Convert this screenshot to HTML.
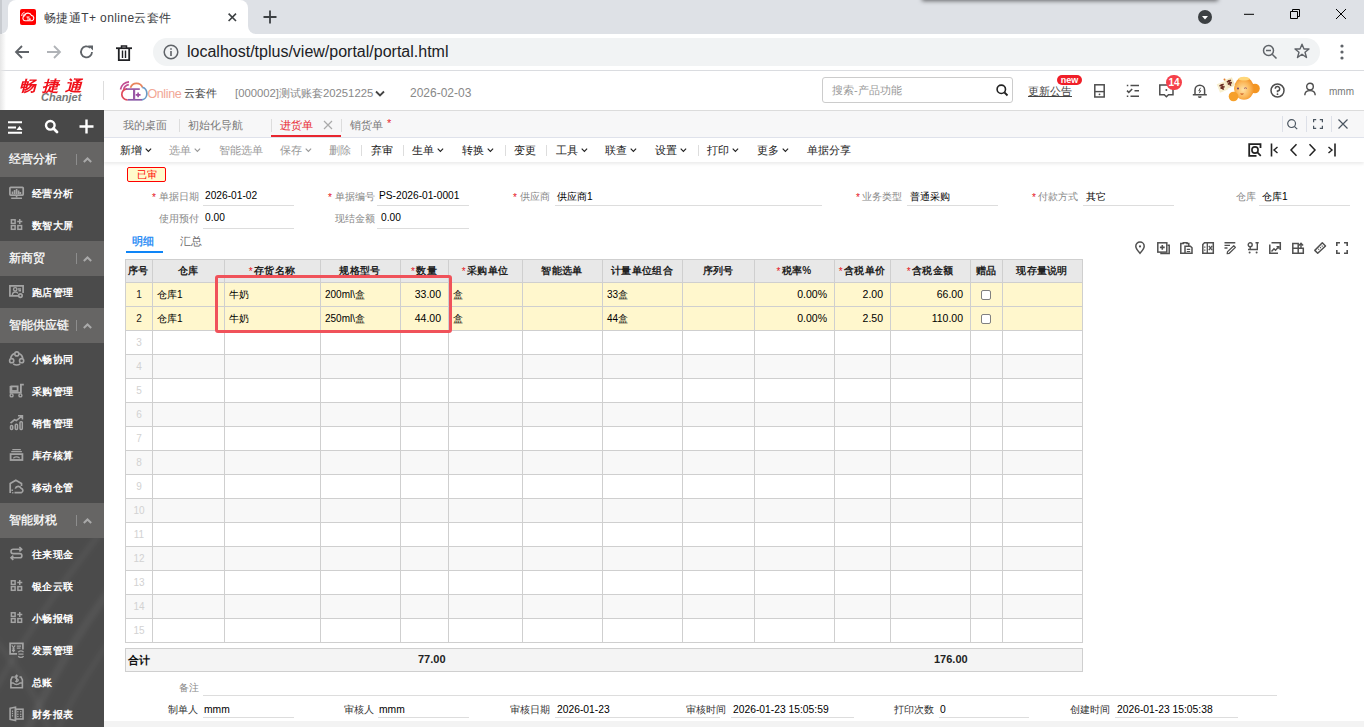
<!DOCTYPE html><html><head><meta charset="utf-8"><style>
*{box-sizing:border-box;margin:0;padding:0}
html,body{width:1364px;height:727px;overflow:hidden;background:#fff;font-family:"Liberation Sans",sans-serif;color:#333}
body{position:relative}
.a{position:absolute;white-space:nowrap}
svg{position:absolute;overflow:visible}
</style></head><body>
<div class="a" style="left:0;top:0;width:1364px;height:34px;background:#dee1e6"></div>
<div class="a" style="left:0;top:24px;width:264px;height:10px;background:#fff"></div>
<div class="a" style="left:0;top:0;width:8px;height:34px;background:#dee1e6;border-bottom-right-radius:8px"></div>
<div class="a" style="left:248px;top:0;width:16px;height:34px;background:#dee1e6;border-bottom-left-radius:8px"></div>
<div class="a" style="left:0;top:0;width:2px;height:34px;background:#c8cbd0"></div>
<div class="a" style="left:8px;top:0;width:240px;height:34px;background:#fff;border-radius:8px 8px 0 0"></div>
<div class="a" style="left:20px;top:9px;width:16px;height:16px;background:#f00;border-radius:2px"></div>
<svg style="left:20px;top:9px" width="16" height="16" viewBox="0 0 16 16"><path d="M5 11.8A2.6 2.6 0 0 1 4.6 6.8A3.6 3.6 0 0 1 11.4 6.4A2.8 2.8 0 0 1 12 11.8Z" fill="none" stroke="#fff" stroke-width="1.1"/><path d="M6.5 8H9.6M8 8V11.8M8.8 10.2H10.8M9.8 9.2V11.2" stroke="#fff" stroke-width="0.9"/><path d="M1.6 7A3.8 3.8 0 0 1 4.6 3.2M3.1 7.2A2.2 2.2 0 0 1 4.9 5" fill="none" stroke="#fff" stroke-width="0.9"/></svg>
<div class="a" style="left:44px;top:10px;font-size:12px;letter-spacing:0.4px;color:#3c4043">畅捷通T+ online云套件</div>
<svg style="left:228px;top:13px" width="9" height="9"><path d="M0.6 0.6L8 8M8 0.6L0.6 8" stroke="#3c4043" stroke-width="1.6"/></svg>
<svg style="left:263px;top:10px" width="14" height="14"><path d="M7 0.5V13.5M0.5 7H13.5" stroke="#3c4043" stroke-width="1.8"/></svg>
<div class="a" style="left:1198px;top:10px;width:14px;height:14px;border-radius:7px;background:#3c4043"></div>
<svg style="left:1198px;top:10px" width="14" height="14"><path d="M4 6L10 6L7 9.5Z" fill="#fff"/></svg>
<svg style="left:1243px;top:9px" width="16" height="16"><path d="M1 5.3H11" stroke="#000" stroke-width="1"/></svg>
<svg style="left:1289px;top:8px" width="14" height="14"><path d="M1.5 3.5h7v7h-7z M3.5 3.5v-2h7v7h-2" fill="none" stroke="#000" stroke-width="1"/></svg>
<svg style="left:1335px;top:8px" width="14" height="14"><path d="M1 1L11 11M11 1L1 11" stroke="#000" stroke-width="1"/></svg>
<div class="a" style="left:922px;top:-6px;width:296px;height:6px;box-shadow:0 1px 4px rgba(0,0,0,.55);background:#fff"></div>
<div class="a" style="left:0;top:34px;width:1364px;height:37px;background:#fff;border-bottom:1px solid #dadce0"></div>
<div class="a" style="left:0;top:34px;width:6px;height:76px;background:linear-gradient(90deg,#e6e6e6,rgba(255,255,255,0))"></div>
<svg style="left:14px;top:44px" width="16" height="16"><path d="M15 8H2M8 2L2 8L8 14" fill="none" stroke="#5f6368" stroke-width="1.8"/></svg>
<svg style="left:46px;top:44px" width="16" height="16"><path d="M1 8H14M8 2L14 8L8 14" fill="none" stroke="#b0b3b7" stroke-width="1.8"/></svg>
<svg style="left:79px;top:44px" width="16" height="16"><path d="M13 8A5.5 5.5 0 1 1 11.2 3.8" fill="none" stroke="#5f6368" stroke-width="1.8"/><path d="M9 1.5H14V6.5Z" fill="#5f6368"/></svg>
<svg style="left:116px;top:45px" width="16" height="17"><path d="M0 3.2H16" stroke="#202124" stroke-width="1.8"/><path d="M5.5 3V1H10.5V3" fill="none" stroke="#202124" stroke-width="1.5"/><path d="M2.8 3.5V15.2H13.2V3.5" fill="none" stroke="#202124" stroke-width="1.8"/><path d="M6.5 5.5V13M9.5 5.5V13" stroke="#202124" stroke-width="1.4"/></svg>
<div class="a" style="left:153px;top:38px;width:1167px;height:28px;background:#f1f3f4;border-radius:14px"></div>
<svg style="left:163px;top:44px" width="16" height="16"><circle cx="8" cy="8" r="6.8" fill="none" stroke="#5f6368" stroke-width="1.5"/><path d="M8 7V12M8 4.3V5.8" stroke="#5f6368" stroke-width="1.6"/></svg>
<div class="a" style="left:187px;top:43px;font-size:16px;color:#202124">localhost/tplus/view/portal/portal.html</div>
<svg style="left:1262px;top:44px" width="16" height="16"><circle cx="6.5" cy="6.5" r="5" fill="none" stroke="#5f6368" stroke-width="1.5"/><path d="M4 6.5H9M10.2 10.2L14.5 14.5" stroke="#5f6368" stroke-width="1.5"/></svg>
<svg style="left:1294px;top:43px" width="16" height="16"><path d="M8 1.2L10 6H15L11 9.2L12.5 14.5L8 11.3L3.5 14.5L5 9.2L1 6H6Z" fill="none" stroke="#5f6368" stroke-width="1.4" stroke-linejoin="round"/></svg>
<svg style="left:1339px;top:44px" width="6" height="16"><circle cx="3" cy="2" r="1.6" fill="#5f6368"/><circle cx="3" cy="8" r="1.6" fill="#5f6368"/><circle cx="3" cy="14" r="1.6" fill="#5f6368"/></svg>
<div class="a" style="left:0;top:71px;width:1364px;height:40px;background:#fff;border-bottom:1px solid #dcdcdc"></div>
<div class="a" style="left:0;top:71px;width:6px;height:39px;background:linear-gradient(90deg,#e6e6e6,rgba(255,255,255,0))"></div>
<div class="a" style="left:19px;top:77px;font-size:15px;font-weight:bold;font-style:italic;color:#f0101a;letter-spacing:5.5px;transform:scaleX(1.12);transform-origin:0 0">畅捷通</div>
<div class="a" style="left:41px;top:91px;font-size:11px;font-weight:bold;font-style:italic;color:#777">Chanjet</div>
<div class="a" style="left:103px;top:81px;width:1px;height:19px;background:#ddd"></div>
<svg style="left:116px;top:78px" width="34" height="26" viewBox="0 0 34 26"><path d="M4.5 11.5A9.5 9.5 0 0 1 13 3.8" fill="none" stroke="#c24d92" stroke-width="1.7"/><path d="M7.6 11.8A6.3 6.3 0 0 1 12.8 6.6" fill="none" stroke="#c24d92" stroke-width="1.6"/><path d="M11 10.8A5.4 5.4 0 0 0 11.6 21.8" fill="none" stroke="#e04a5a" stroke-width="1.7"/><path d="M11.6 21.8H26" fill="none" stroke="#8a5aa8" stroke-width="1.7"/><path d="M14.5 9.8A6.4 6.4 0 0 1 26.5 9.5" fill="none" stroke="#e9855c" stroke-width="1.7"/><path d="M26.3 9.3A5.4 6.3 0 0 1 26 21.8" fill="none" stroke="#6a9ac8" stroke-width="1.7"/><path d="M10 11.1H23.8" stroke="#9a5aa6" stroke-width="1.7"/><path d="M18.1 11V21.5" stroke="#9a5aa6" stroke-width="2.2"/><path d="M22.1 14.5V19.3M19.7 16.9H24.5" stroke="#9a4aa0" stroke-width="1.6"/></svg>
<div class="a" style="left:147.5px;top:87px;font-size:12.5px;letter-spacing:-0.4px;color:#f2a796">Online</div>
<div class="a" style="left:184px;top:87px;font-size:10.5px;color:#444">云套件</div>
<div class="a" style="left:235px;top:86px;font-size:11.3px;color:#888">[000002]测试账套20251225</div>
<svg style="left:375px;top:90px" width="10" height="8"><path d="M1 1.5L5 5.5L9 1.5" fill="none" stroke="#444" stroke-width="1.8"/></svg>
<div class="a" style="left:410px;top:86px;font-size:12px;color:#888">2026-02-03</div>
<div class="a" style="left:822px;top:77px;width:191px;height:26px;border:1px solid #ccc;border-radius:3px;background:#fff"></div>
<div class="a" style="left:832px;top:83px;font-size:11px;color:#999">搜索-产品功能</div>
<svg style="left:996px;top:84px" width="14" height="14"><circle cx="5.3" cy="5.3" r="4.2" fill="none" stroke="#222" stroke-width="1.6"/><path d="M8.5 8.5L11.5 11.5" stroke="#222" stroke-width="1.8"/></svg>
<div class="a" style="left:1028px;top:84px;font-size:11px;color:#444;text-decoration:underline">更新公告</div>
<div class="a" style="left:1057px;top:75px;width:25px;height:10px;border-radius:5px;background:#f01e28;color:#fff;font-size:9px;font-weight:bold;line-height:10px;text-align:center">new</div>
<svg style="left:1094px;top:84px" width="11" height="14"><rect x="0.8" y="0.8" width="9.4" height="12.2" fill="none" stroke="#4d4d4d" stroke-width="1.5"/><path d="M0.8 7.6H10.2" stroke="#4d4d4d" stroke-width="1.4"/><circle cx="5.5" cy="10.3" r="0.9" fill="#4d4d4d"/></svg>
<svg style="left:1126px;top:84px" width="14" height="14"><path d="M4.5 1.4H13M8.5 6.8H13M4.5 12.2H13" stroke="#4d4d4d" stroke-width="1.5"/><path d="M1 6.6L2.8 8.4L6.2 5" fill="none" stroke="#4d4d4d" stroke-width="1.5"/><path d="M0.8 1.4H2.3M0.8 12.2H2.3" stroke="#4d4d4d" stroke-width="1.5"/></svg>
<svg style="left:1159px;top:84px" width="15" height="14"><path d="M0.8 1H14V10.8H9.5L7.4 12.8L5.3 10.8H0.8Z" fill="none" stroke="#4d4d4d" stroke-width="1.5"/><circle cx="7.4" cy="6" r="1" fill="#4d4d4d"/></svg>
<div class="a" style="left:1166px;top:75px;width:16px;height:15px;border-radius:8px;background:#f5404a;color:#fff;font-size:10px;font-weight:bold;line-height:15px;text-align:center">14</div>
<svg style="left:1192px;top:83px" width="16" height="15"><path d="M3 11.5V7A4.8 4.8 0 0 1 12.6 7V11.5M0.8 11.8H14.8M6.4 13.3A1.6 1.6 0 0 0 9.2 13.3" fill="none" stroke="#4d4d4d" stroke-width="1.5"/><path d="M8.5 4.8L6.8 7.8H8.8L7.2 10.2" fill="none" stroke="#4d4d4d" stroke-width="1"/></svg>
<svg style="left:1210px;top:72px" width="56" height="34" viewBox="0 0 56 34"><defs><radialGradient id="mh" cx="45%" cy="55%" r="60%"><stop offset="0" stop-color="#ffe2a6"/><stop offset="0.6" stop-color="#fbb454"/><stop offset="1" stop-color="#f08a1c"/></radialGradient></defs><circle cx="45" cy="16.5" r="4.8" fill="#f39522"/><ellipse cx="34" cy="16.5" rx="10" ry="11.3" fill="url(#mh)"/><path d="M28 7C30 4 38 4 40 7C37 9 31 9 28 7Z" fill="#ffd77a"/><circle cx="28" cy="16.5" r="1" fill="#6a3d6a"/><path d="M34 16.5Q35.5 15 37 16.5" stroke="#8a4a6a" stroke-width="0.8" fill="none"/><path d="M30 21.5Q32 24 34 21.5Z" fill="#c9541a"/><circle cx="23.5" cy="24.5" r="4.8" fill="#f6a02a"/><g transform="rotate(-22 16 14)"><rect x="8" y="9" width="8.5" height="9" fill="#f8efcf"/><rect x="16.3" y="8" width="8.5" height="9" fill="#f4e8c4"/><path d="M10 11.5h4.5M10 14h4.5M12.2 10.5v6M18.3 10.5h4.5M18.3 13h4.5M20.5 9.5v6" stroke="#6b2f24" stroke-width="1.6"/></g><circle cx="14.5" cy="7.5" r="1" fill="#e07a2a"/></svg>
<svg style="left:1270px;top:83px" width="15" height="15"><circle cx="7.5" cy="7.5" r="6.5" fill="none" stroke="#4d4d4d" stroke-width="1.5"/><path d="M5.3 5.8A2.2 2.2 0 1 1 7.5 8V9.2" fill="none" stroke="#4d4d4d" stroke-width="1.5"/><circle cx="7.5" cy="11.2" r="0.9" fill="#4d4d4d"/></svg>
<svg style="left:1303px;top:82px" width="14" height="15"><circle cx="7" cy="4.6" r="3.3" fill="none" stroke="#4d4d4d" stroke-width="1.4"/><path d="M1.8 13.3C1.8 10.3 4 8.6 7 8.6S12.2 10.3 12.2 13.3" fill="none" stroke="#4d4d4d" stroke-width="1.4"/></svg>
<div class="a" style="left:1329px;top:86px;font-size:10px;color:#777">mmm</div>
<div class="a" style="left:0;top:110px;width:104px;height:617px;background:#4b4b4b"></div>
<div class="a" style="left:0;top:110px;width:104px;height:32px;background:#484848"></div>
<svg style="left:8px;top:121px" width="16" height="13"><path d="M0 1.2H14M0 6.5H8M0 11.8H14" stroke="#fff" stroke-width="2"/><path d="M11.5 5L14.5 9H8.5Z" fill="#fff"/></svg>
<svg style="left:44px;top:119px" width="16" height="16"><circle cx="6.3" cy="6.3" r="4.3" fill="none" stroke="#fff" stroke-width="2.4"/><path d="M9.5 9.5L13 13" stroke="#fff" stroke-width="2.8" stroke-linecap="round"/></svg>
<svg style="left:79px;top:119px" width="16" height="16"><path d="M7.5 0.5V14.5M0.5 7.5H14.5" stroke="#fff" stroke-width="2.4"/></svg>
<svg style="left:0;top:520px" width="104" height="207" viewBox="0 0 104 207"><defs><filter id="bl" x="-50%" y="-50%" width="200%" height="200%"><feGaussianBlur stdDeviation="2.5"/></filter></defs><g fill="none" stroke="#fff" filter="url(#bl)"><path d="M110 0C80 40 40 90 -5 170" stroke-width="5" stroke-opacity="0.05"/><path d="M110 70C80 110 50 160 25 215" stroke-width="7" stroke-opacity="0.06"/><path d="M110 120C90 150 70 180 55 215" stroke-width="4" stroke-opacity="0.05"/><path d="M-5 120C20 150 40 180 50 215" stroke-width="6" stroke-opacity="0.04"/></g></svg>
<div class="a" style="left:0;top:142px;width:104px;height:35px;background:#666564"></div>
<div class="a" style="left:9px;top:151px;font-size:12px;-webkit-text-stroke:0.25px #fff;color:#fff">经营分析</div>
<div class="a" style="left:76px;top:154px;width:1px;height:11px;background:#8d8d8d"></div>
<svg style="left:82.5px;top:157px" width="9" height="6"><path d="M0.8 5L4.5 1.5L8.2 5" fill="none" stroke="#a9a9a9" stroke-width="2"/></svg>
<svg style="left:0;top:177px" width="30" height="32"><rect x="9.9" y="10.3" width="13.3" height="7.8" rx="0.8" fill="none" stroke="#a4a4a4" stroke-width="1.7"/><path d="M12.5 17V14.5M14.6 17V13M16.6 17V12M18.6 17V13.5M20.4 17V15" stroke="#a4a4a4" stroke-width="1.6"/><path d="M16.6 18.5V20.3M11.2 21.2H22" stroke="#a4a4a4" stroke-width="1.6"/></svg>
<div class="a" style="left:32px;top:187px;font-size:10px;letter-spacing:0.3px;color:#fff;font-weight:bold">经营分析</div>
<svg style="left:0;top:209px" width="30" height="32"><rect x="11.4" y="10.8" width="3.7" height="3.6" fill="none" stroke="#a4a4a4" stroke-width="1.5"/><rect x="11.4" y="16.6" width="3.7" height="3.7" fill="none" stroke="#a4a4a4" stroke-width="1.5"/><rect x="17.9" y="16.6" width="3.7" height="3.7" fill="none" stroke="#a4a4a4" stroke-width="1.5"/><path d="M19.75 10V15.1M17.2 12.5H22.3" stroke="#a4a4a4" stroke-width="1.5"/></svg>
<div class="a" style="left:32px;top:219px;font-size:10px;letter-spacing:0.3px;color:#fff;font-weight:bold">数智大屏</div>
<div class="a" style="left:0;top:241px;width:104px;height:35px;background:#666564"></div>
<div class="a" style="left:9px;top:250px;font-size:12px;-webkit-text-stroke:0.25px #fff;color:#fff">新商贸</div>
<div class="a" style="left:76px;top:253px;width:1px;height:11px;background:#8d8d8d"></div>
<svg style="left:82.5px;top:256px" width="9" height="6"><path d="M0.8 5L4.5 1.5L8.2 5" fill="none" stroke="#a9a9a9" stroke-width="2"/></svg>
<svg style="left:0;top:276px" width="30" height="32"><path d="M18.5 19.8H9.9V9.9H23.1V17" fill="none" stroke="#a4a4a4" stroke-width="1.7"/><circle cx="15.2" cy="13.3" r="1.7" fill="none" stroke="#a4a4a4" stroke-width="1.4"/><path d="M12.3 19.5C12.5 16.8 14 16 15.2 16S17.5 16.5 17.8 17.5M17.8 13H21M18.5 14.8H21" fill="none" stroke="#a4a4a4" stroke-width="1.4"/><circle cx="20.4" cy="19.6" r="2.6" fill="#a4a4a4"/><circle cx="20.4" cy="19.6" r="0.9" fill="#4b4b4b"/></svg>
<div class="a" style="left:32px;top:286px;font-size:10px;letter-spacing:0.3px;color:#fff;font-weight:bold">跑店管理</div>
<div class="a" style="left:0;top:308px;width:104px;height:35px;background:#666564"></div>
<div class="a" style="left:9px;top:317px;font-size:12px;-webkit-text-stroke:0.25px #fff;color:#fff">智能供应链</div>
<div class="a" style="left:76px;top:320px;width:1px;height:11px;background:#8d8d8d"></div>
<svg style="left:82.5px;top:323px" width="9" height="6"><path d="M0.8 5L4.5 1.5L8.2 5" fill="none" stroke="#a9a9a9" stroke-width="2"/></svg>
<svg style="left:0;top:343px" width="30" height="32"><circle cx="16.8" cy="10.9" r="2" fill="none" stroke="#a4a4a4" stroke-width="1.6"/><circle cx="11.7" cy="17.7" r="2.1" fill="none" stroke="#a4a4a4" stroke-width="1.6"/><circle cx="21.6" cy="17.7" r="2.1" fill="none" stroke="#a4a4a4" stroke-width="1.6"/><path d="M10.6 15.3A6.4 6.4 0 0 1 14.6 10.6M19 10.6A6.4 6.4 0 0 1 22.8 15.3M13.2 20.9A6.4 6.4 0 0 0 20.2 20.9" fill="none" stroke="#a4a4a4" stroke-width="1.6"/></svg>
<div class="a" style="left:32px;top:353px;font-size:10px;letter-spacing:0.3px;color:#fff;font-weight:bold">小畅协同</div>
<svg style="left:0;top:375px" width="30" height="32"><rect x="11.4" y="11.4" width="6.2" height="4.6" fill="none" stroke="#a4a4a4" stroke-width="1.8"/><path d="M10.2 17.6H20.9V9.6H23.8" fill="none" stroke="#a4a4a4" stroke-width="1.8"/><circle cx="11.6" cy="20.4" r="1.5" fill="none" stroke="#a4a4a4" stroke-width="1.4"/><circle cx="20.4" cy="20.4" r="1.5" fill="none" stroke="#a4a4a4" stroke-width="1.4"/><path d="M10.4 11V18.5" stroke="#a4a4a4" stroke-width="1.6"/></svg>
<div class="a" style="left:32px;top:385px;font-size:10px;letter-spacing:0.3px;color:#fff;font-weight:bold">采购管理</div>
<svg style="left:0;top:407px" width="30" height="32"><rect x="10.5" y="18.4" width="2.2" height="4" rx="1" fill="none" stroke="#a4a4a4" stroke-width="1.5"/><rect x="15.3" y="17.3" width="2.2" height="5.1" rx="0.8" fill="none" stroke="#a4a4a4" stroke-width="1.5"/><rect x="20" y="14.7" width="2.3" height="7.7" rx="0.8" fill="none" stroke="#a4a4a4" stroke-width="1.5"/><path d="M10.5 16.2L14.5 12.8L16.3 13.6L21.8 9.2M18 8.8H22.4V12.6" fill="none" stroke="#a4a4a4" stroke-width="1.6"/></svg>
<div class="a" style="left:32px;top:417px;font-size:10px;letter-spacing:0.3px;color:#fff;font-weight:bold">销售管理</div>
<svg style="left:0;top:439px" width="30" height="32"><path d="M12.3 10.6H20.8M11.2 12.7H21.9" stroke="#a4a4a4" stroke-width="1.3"/><rect x="10.6" y="15.1" width="11.8" height="5.9" fill="none" stroke="#a4a4a4" stroke-width="1.8"/><path d="M13.3 19.2Q16.5 16.6 19.7 19.2" fill="none" stroke="#a4a4a4" stroke-width="1.3"/></svg>
<div class="a" style="left:32px;top:449px;font-size:10px;letter-spacing:0.3px;color:#fff;font-weight:bold">库存核算</div>
<svg style="left:0;top:471px" width="30" height="32"><path d="M10.2 22V12.6L15.8 9.2L21.5 12.6V15" fill="none" stroke="#a4a4a4" stroke-width="1.7"/><path d="M14.5 21.6H21.5A2.2 2.2 0 0 0 21.2 17.4A3.1 3.1 0 0 0 15.3 17.6" fill="none" stroke="#a4a4a4" stroke-width="1.6"/><path d="M12.2 21.7h1.2M12.2 18.5V20" stroke="#a4a4a4" stroke-width="1.5"/></svg>
<div class="a" style="left:32px;top:481px;font-size:10px;letter-spacing:0.3px;color:#fff;font-weight:bold">移动仓管</div>
<div class="a" style="left:0;top:503px;width:104px;height:35px;background:#666564"></div>
<div class="a" style="left:9px;top:512px;font-size:12px;-webkit-text-stroke:0.25px #fff;color:#fff">智能财税</div>
<div class="a" style="left:76px;top:515px;width:1px;height:11px;background:#8d8d8d"></div>
<svg style="left:82.5px;top:518px" width="9" height="6"><path d="M0.8 5L4.5 1.5L8.2 5" fill="none" stroke="#a9a9a9" stroke-width="2"/></svg>
<svg style="left:0;top:538px" width="30" height="32"><path d="M21.5 11.2H13.2A2.2 2.2 0 0 0 13.2 15.6H19.8A2 2 0 0 1 19.8 19.8H11M19.4 9L21.7 11.2L19.4 13.4M13.3 17.6L11 19.8L13.3 22" fill="none" stroke="#a4a4a4" stroke-width="1.6"/></svg>
<div class="a" style="left:32px;top:548px;font-size:10px;letter-spacing:0.3px;color:#fff;font-weight:bold">往来现金</div>
<svg style="left:0;top:570px" width="30" height="32"><rect x="11.4" y="10.8" width="3.7" height="3.6" fill="none" stroke="#a4a4a4" stroke-width="1.5"/><rect x="11.4" y="16.6" width="3.7" height="3.7" fill="none" stroke="#a4a4a4" stroke-width="1.5"/><rect x="17.9" y="16.6" width="3.7" height="3.7" fill="none" stroke="#a4a4a4" stroke-width="1.5"/><path d="M19.75 10V15.1M17.2 12.5H22.3" stroke="#a4a4a4" stroke-width="1.5"/></svg>
<div class="a" style="left:32px;top:580px;font-size:10px;letter-spacing:0.3px;color:#fff;font-weight:bold">银企云联</div>
<svg style="left:0;top:602px" width="30" height="32"><rect x="11.4" y="10.8" width="3.7" height="3.6" fill="none" stroke="#a4a4a4" stroke-width="1.5"/><rect x="11.4" y="16.6" width="3.7" height="3.7" fill="none" stroke="#a4a4a4" stroke-width="1.5"/><rect x="17.9" y="16.6" width="3.7" height="3.7" fill="none" stroke="#a4a4a4" stroke-width="1.5"/><path d="M19.75 10V15.1M17.2 12.5H22.3" stroke="#a4a4a4" stroke-width="1.5"/></svg>
<div class="a" style="left:32px;top:612px;font-size:10px;letter-spacing:0.3px;color:#fff;font-weight:bold">小畅报销</div>
<svg style="left:0;top:634px" width="30" height="32"><path d="M17 19.9H10.1V9.4H22.9V15.5" fill="none" stroke="#a4a4a4" stroke-width="1.7"/><path d="M11.8 11.4L13.5 13.8L15.2 11.4M13.5 13.8V18.3M11.9 15H15.1M11.9 16.7H15.1M16.8 12.2H21M16.8 14.2H20.5" fill="none" stroke="#a4a4a4" stroke-width="1.2"/><path d="M18.3 18.3A2.7 2 0 0 1 23.5 18.3M18.3 22A2.7 2 0 0 0 23.5 22M18.5 20.2H23.5" fill="none" stroke="#a4a4a4" stroke-width="1.3"/></svg>
<div class="a" style="left:32px;top:644px;font-size:10px;letter-spacing:0.3px;color:#fff;font-weight:bold">发票管理</div>
<svg style="left:0;top:666px" width="30" height="32"><path d="M13.8 11H12.2L10.9 14V21.8H22.4V14L21 11H19.4" fill="none" stroke="#a4a4a4" stroke-width="1.6"/><path d="M10.9 17H13.2Q16.6 20 20 17H22.4" fill="none" stroke="#a4a4a4" stroke-width="1.4"/><path d="M18 10.2Q16.6 9 15.3 10.2T16.6 12.6T17.9 15Q16.6 16.2 15.2 15M16.6 8.6V16.6" fill="none" stroke="#a4a4a4" stroke-width="1.2"/></svg>
<div class="a" style="left:32px;top:676px;font-size:10px;letter-spacing:0.3px;color:#fff;font-weight:bold">总账</div>
<svg style="left:0;top:698px" width="30" height="32"><path d="M10.1 10.3L15.5 9.2V22.5L10.1 21.4Z" fill="none" stroke="#a4a4a4" stroke-width="1.6"/><path d="M12.5 12.5V19" stroke="#a4a4a4" stroke-width="1.2" stroke-dasharray="1.5 0.8"/><rect x="15.5" y="11.2" width="7.5" height="9.8" fill="none" stroke="#a4a4a4" stroke-width="1.6"/><path d="M17.8 13.8h.1M20.7 13.8h.1M17.8 16.2h.1M20.7 16.2h.1M17.8 18.6h.1M20.7 18.6h.1" stroke="#a4a4a4" stroke-width="1.5" stroke-linecap="round"/></svg>
<div class="a" style="left:32px;top:708px;font-size:10px;letter-spacing:0.3px;color:#fff;font-weight:bold">财务报表</div>
<div class="a" style="left:104px;top:111px;width:1260px;height:616px;background:#fff"></div>
<div class="a" style="left:104px;top:111px;width:1260px;height:27px;background:#f7f7f8;border-bottom:1px solid #e0e3ec"></div>
<div class="a" style="left:123px;top:118px;font-size:11px;color:#777">我的桌面</div>
<div class="a" style="left:179px;top:119px;width:1px;height:13px;background:#ddd"></div>
<div class="a" style="left:188px;top:118px;font-size:11px;color:#777">初始化导航</div>
<div class="a" style="left:271px;top:119px;width:1px;height:13px;background:#ddd"></div>
<div class="a" style="left:280px;top:118px;font-size:11px;color:#e8262f">进货单</div>
<svg style="left:323px;top:120px" width="10" height="10"><path d="M1 1L9 9M9 1L1 9" stroke="#aaa" stroke-width="1.2"/></svg>
<div class="a" style="left:271px;top:135px;width:70px;height:2px;background:#e8262f"></div>
<div class="a" style="left:341px;top:119px;width:1px;height:13px;background:#ddd"></div>
<div class="a" style="left:350px;top:118px;font-size:11px;color:#777">销货单</div>
<div class="a" style="left:387px;top:117px;font-size:11px;color:#e8262f">*</div>
<div class="a" style="left:1282px;top:116px;width:1px;height:16px;background:#dde0e8"></div>
<div class="a" style="left:1306px;top:116px;width:1px;height:16px;background:#dde0e8"></div>
<div class="a" style="left:1331px;top:116px;width:1px;height:16px;background:#dde0e8"></div>
<svg style="left:1287px;top:119px" width="11" height="11"><circle cx="4.6" cy="4.6" r="3.9" fill="none" stroke="#4a5560" stroke-width="1.2"/><path d="M7.6 7.6L10.2 10.2" stroke="#4a5560" stroke-width="1.2"/></svg>
<svg style="left:1313px;top:119px" width="10" height="10"><path d="M0.6 3.2V0.6H3.2M6.8 0.6H9.4V3.2M9.4 6.8V9.4H6.8M3.2 9.4H0.6V6.8" fill="none" stroke="#4a5560" stroke-width="1.2"/></svg>
<svg style="left:1338px;top:119px" width="10" height="10"><path d="M0.5 0.5L9.5 9.5M9.5 0.5L0.5 9.5" stroke="#4a5560" stroke-width="1.2"/></svg>
<div class="a" style="left:104px;top:138px;width:1260px;height:24px;background:#fff;box-shadow:0 2px 3px rgba(0,0,0,.08)"></div>
<div class="a" style="left:120px;top:143px;font-size:11px;color:#222">新增</div>
<svg style="left:144.5px;top:148px" width="7" height="5"><path d="M0.7 0.7L3.4 3.4L6.1 0.7" fill="none" stroke="#222" stroke-width="1.15"/></svg>
<div class="a" style="left:169px;top:143px;font-size:11px;color:#999">选单</div>
<svg style="left:193.5px;top:148px" width="7" height="5"><path d="M0.7 0.7L3.4 3.4L6.1 0.7" fill="none" stroke="#999" stroke-width="1.15"/></svg>
<div class="a" style="left:219px;top:143px;font-size:11px;color:#999">智能选单</div>
<div class="a" style="left:280px;top:143px;font-size:11px;color:#999">保存</div>
<svg style="left:304.5px;top:148px" width="7" height="5"><path d="M0.7 0.7L3.4 3.4L6.1 0.7" fill="none" stroke="#999" stroke-width="1.15"/></svg>
<div class="a" style="left:329px;top:143px;font-size:11px;color:#999">删除</div>
<div class="a" style="left:361px;top:145px;width:1px;height:11px;background:#ddd"></div>
<div class="a" style="left:371px;top:143px;font-size:11px;color:#222">弃审</div>
<div class="a" style="left:403px;top:145px;width:1px;height:11px;background:#ddd"></div>
<div class="a" style="left:412px;top:143px;font-size:11px;color:#222">生单</div>
<svg style="left:436.5px;top:148px" width="7" height="5"><path d="M0.7 0.7L3.4 3.4L6.1 0.7" fill="none" stroke="#222" stroke-width="1.15"/></svg>
<div class="a" style="left:462px;top:143px;font-size:11px;color:#222">转换</div>
<svg style="left:486.5px;top:148px" width="7" height="5"><path d="M0.7 0.7L3.4 3.4L6.1 0.7" fill="none" stroke="#222" stroke-width="1.15"/></svg>
<div class="a" style="left:505px;top:145px;width:1px;height:11px;background:#ddd"></div>
<div class="a" style="left:514px;top:143px;font-size:11px;color:#222">变更</div>
<div class="a" style="left:546px;top:145px;width:1px;height:11px;background:#ddd"></div>
<div class="a" style="left:556px;top:143px;font-size:11px;color:#222">工具</div>
<svg style="left:580.5px;top:148px" width="7" height="5"><path d="M0.7 0.7L3.4 3.4L6.1 0.7" fill="none" stroke="#222" stroke-width="1.15"/></svg>
<div class="a" style="left:605px;top:143px;font-size:11px;color:#222">联查</div>
<svg style="left:629.5px;top:148px" width="7" height="5"><path d="M0.7 0.7L3.4 3.4L6.1 0.7" fill="none" stroke="#222" stroke-width="1.15"/></svg>
<div class="a" style="left:655px;top:143px;font-size:11px;color:#222">设置</div>
<svg style="left:679.5px;top:148px" width="7" height="5"><path d="M0.7 0.7L3.4 3.4L6.1 0.7" fill="none" stroke="#222" stroke-width="1.15"/></svg>
<div class="a" style="left:698px;top:145px;width:1px;height:11px;background:#ddd"></div>
<div class="a" style="left:707px;top:143px;font-size:11px;color:#222">打印</div>
<svg style="left:731.5px;top:148px" width="7" height="5"><path d="M0.7 0.7L3.4 3.4L6.1 0.7" fill="none" stroke="#222" stroke-width="1.15"/></svg>
<div class="a" style="left:757px;top:143px;font-size:11px;color:#222">更多</div>
<svg style="left:781.5px;top:148px" width="7" height="5"><path d="M0.7 0.7L3.4 3.4L6.1 0.7" fill="none" stroke="#222" stroke-width="1.15"/></svg>
<div class="a" style="left:807px;top:143px;font-size:11px;color:#222">单据分享</div>
<svg style="left:1248px;top:143px" width="14" height="14"><path d="M12.5 5V1.2H1.2V12.8H8.5" fill="none" stroke="#222" stroke-width="1.8"/><circle cx="7" cy="7" r="3.1" fill="none" stroke="#222" stroke-width="1.6"/><path d="M9.2 9.2L12.8 12.8" stroke="#222" stroke-width="1.7"/></svg>
<svg style="left:1270px;top:143px" width="10" height="14"><path d="M1.5 0.5V13.5" stroke="#222" stroke-width="1.6"/><path d="M7.5 4L4 7L7.5 10" fill="none" stroke="#222" stroke-width="1.4"/></svg>
<svg style="left:1289px;top:143px" width="9" height="14"><path d="M7.5 1.2L2 7L7.5 12.8" fill="none" stroke="#222" stroke-width="1.5"/></svg>
<svg style="left:1308px;top:143px" width="9" height="14"><path d="M1.5 1.2L7 7L1.5 12.8" fill="none" stroke="#222" stroke-width="1.5"/></svg>
<svg style="left:1327px;top:143px" width="10" height="14"><path d="M8 0.5V13.5" stroke="#222" stroke-width="1.6"/><path d="M1.5 4L5 7L1.5 10" fill="none" stroke="#222" stroke-width="1.4"/></svg>
<div class="a" style="left:127px;top:167px;width:39px;height:15px;border:1px solid #f00;background:#fffbcc;border-radius:2px;color:#f00;font-size:10px;line-height:13px;text-align:center">已审</div>
<div class="a" style="left:152px;top:192px;font-size:10px;color:#e5161c">*</div>
<div class="a" style="left:159px;top:190px;font-size:10px;color:#888">单据日期</div>
<div class="a" style="left:205px;top:190px;font-size:10.2px;color:#000">2026-01-02</div>
<div class="a" style="left:203px;top:205px;width:91px;height:1px;background:#ddd"></div>
<div class="a" style="left:159px;top:212px;font-size:10px;color:#888">使用预付</div>
<div class="a" style="left:205px;top:212px;font-size:10.2px;color:#000">0.00</div>
<div class="a" style="left:203px;top:228px;width:91px;height:1px;background:#ddd"></div>
<div class="a" style="left:328px;top:192px;font-size:10px;color:#e5161c">*</div>
<div class="a" style="left:335px;top:190px;font-size:10px;color:#888">单据编号</div>
<div class="a" style="left:379px;top:190px;font-size:10.2px;color:#000">PS-2026-01-0001</div>
<div class="a" style="left:377px;top:205px;width:92px;height:1px;background:#ddd"></div>
<div class="a" style="left:335px;top:212px;font-size:10px;color:#888">现结金额</div>
<div class="a" style="left:381px;top:212px;font-size:10.2px;color:#000">0.00</div>
<div class="a" style="left:377px;top:228px;width:92px;height:1px;background:#ddd"></div>
<div class="a" style="left:513px;top:192px;font-size:10px;color:#e5161c">*</div>
<div class="a" style="left:520px;top:190px;font-size:10px;color:#888">供应商</div>
<div class="a" style="left:557px;top:190px;font-size:10.2px;color:#000">供应商1</div>
<div class="a" style="left:555px;top:205px;width:267px;height:1px;background:#ddd"></div>
<div class="a" style="left:856px;top:192px;font-size:10px;color:#e5161c">*</div>
<div class="a" style="left:862px;top:190px;font-size:10px;color:#888">业务类型</div>
<div class="a" style="left:910px;top:190px;font-size:10.2px;color:#000">普通采购</div>
<div class="a" style="left:907px;top:205px;width:91px;height:1px;background:#ddd"></div>
<div class="a" style="left:1032px;top:192px;font-size:10px;color:#e5161c">*</div>
<div class="a" style="left:1038px;top:190px;font-size:10px;color:#888">付款方式</div>
<div class="a" style="left:1086px;top:190px;font-size:10.2px;color:#000">其它</div>
<div class="a" style="left:1083px;top:205px;width:91px;height:1px;background:#ddd"></div>
<div class="a" style="left:1236px;top:190px;font-size:10px;color:#888">仓库</div>
<div class="a" style="left:1262px;top:190px;font-size:10.2px;color:#000">仓库1</div>
<div class="a" style="left:1259px;top:205px;width:91px;height:1px;background:#ddd"></div>
<div class="a" style="left:132px;top:234px;font-size:11px;-webkit-text-stroke:0.3px #1585f5;color:#1585f5">明细</div>
<div class="a" style="left:126px;top:251px;width:37px;height:2px;background:#0f85f7"></div>
<div class="a" style="left:180px;top:234px;font-size:11px;color:#666">汇总</div>
<svg style="left:1135px;top:242px" width="12" height="12"><path d="M5 11.3C2.3 8.3 0.8 6.3 0.8 4.3A4.2 4.2 0 0 1 9.2 4.3C9.2 6.3 7.7 8.3 5 11.3Z" fill="none" stroke="#505050" stroke-width="1.5"/><circle cx="5" cy="4.4" r="1.1" fill="#505050"/></svg>
<svg style="left:1156.5px;top:242px" width="12" height="12"><path d="M4 10.2V11.4H12.2V3.3H10.5" fill="none" stroke="#505050" stroke-width="1.5"/><rect x="0.8" y="0.8" width="9" height="9.3" fill="none" stroke="#505050" stroke-width="1.5"/><path d="M5.3 3V7.8M2.9 5.4H7.7" stroke="#505050" stroke-width="1.6"/></svg>
<svg style="left:1179.5px;top:242px" width="12" height="12"><path d="M5.5 11.2H0.8V1.5H3.3V0.7H7V1.5H8.8V4" fill="none" stroke="#505050" stroke-width="1.5"/><path d="M5 4.3H10.4L12 5.8V11.3H5Z" fill="#fff" stroke="#505050" stroke-width="1.5"/><path d="M6.8 7.4H10.2M6.8 9.5H10.2" stroke="#505050" stroke-width="1.2"/></svg>
<svg style="left:1201.5px;top:242px" width="12" height="12"><path d="M2.5 0.8H11.3V11.3H0.8V2.5Z" fill="none" stroke="#505050" stroke-width="1.5"/><path d="M5.3 1V11M2.8 4.5V5.8M2.8 7.5V8.8" stroke="#505050" stroke-width="1.3"/><path d="M6.8 3.8L10.2 8.2M10.2 3.8L6.8 8.2" stroke="#505050" stroke-width="1.3"/></svg>
<svg style="left:1224px;top:242px" width="12" height="12"><path d="M0.5 0.8H11.3M0.5 3.4H6M0.5 6H3.5" stroke="#505050" stroke-width="1.4"/><path d="M9.8 3.8L11.4 5.4L5.3 11.3L3.2 11.6L3.6 9.6Z" fill="none" stroke="#505050" stroke-width="1.3" stroke-linejoin="round"/></svg>
<svg style="left:1246.5px;top:242px" width="12" height="12"><circle cx="3.2" cy="2.8" r="2" fill="none" stroke="#505050" stroke-width="1.4"/><path d="M3.2 4.8V7.5H10.3V1M8.5 0.8H11.7M1 7.5H3.2" fill="none" stroke="#505050" stroke-width="1.4"/><circle cx="2.6" cy="10.6" r="1" fill="#505050"/><circle cx="9.6" cy="10.6" r="1" fill="#505050"/></svg>
<svg style="left:1269px;top:242px" width="12" height="12"><path d="M2.5 0.8H11.3V8M0.8 2.5V11.3H9" fill="none" stroke="#505050" stroke-width="1.5"/><path d="M2.5 9.5L5 6.8L6.5 8.2L9.5 5" fill="none" stroke="#505050" stroke-width="1.4"/><path d="M7.5 4.6H10V7" fill="none" stroke="#505050" stroke-width="1.3"/></svg>
<svg style="left:1291.5px;top:242px" width="12" height="12"><path d="M0.8 1.5V11.3H11.3V6.3H6.2V1.5H0.8ZM0.8 6.3H6.2V11.3" fill="none" stroke="#505050" stroke-width="1.5"/><path d="M9 7V1.5M6.9 3.5L9 1.2L11.1 3.5" fill="none" stroke="#505050" stroke-width="1.4"/></svg>
<svg style="left:1314px;top:242px" width="12" height="12"><path d="M8.3 0.8L11.5 4L3.7 11.3L0.8 8.4Z" fill="none" stroke="#505050" stroke-width="1.5" stroke-linejoin="round"/><path d="M4.3 6.8L5.2 7.7M6 5.2L6.9 6.1M7.7 3.6L8.6 4.5" stroke="#505050" stroke-width="1.1"/></svg>
<svg style="left:1336px;top:242px" width="12" height="12"><path d="M0.8 4V0.8H4M8 0.8H11.2V4M11.2 8V11.2H8M4 11.2H0.8V8" fill="none" stroke="#505050" stroke-width="1.6"/></svg>
<div class="a" style="left:125px;top:259px;width:958px;height:24px;background:#e8e8e8"></div>
<div class="a" style="left:125px;top:282px;width:958px;height:25px;background:#fff7cd"></div>
<div class="a" style="left:125px;top:306px;width:958px;height:25px;background:#fff7cd"></div>
<div class="a" style="left:125px;top:330px;width:958px;height:25px;background:#fff"></div>
<div class="a" style="left:125px;top:354px;width:958px;height:25px;background:#f8f8f8"></div>
<div class="a" style="left:125px;top:378px;width:958px;height:25px;background:#fff"></div>
<div class="a" style="left:125px;top:402px;width:958px;height:25px;background:#f8f8f8"></div>
<div class="a" style="left:125px;top:426px;width:958px;height:25px;background:#fff"></div>
<div class="a" style="left:125px;top:450px;width:958px;height:25px;background:#f8f8f8"></div>
<div class="a" style="left:125px;top:474px;width:958px;height:25px;background:#fff"></div>
<div class="a" style="left:125px;top:498px;width:958px;height:25px;background:#f8f8f8"></div>
<div class="a" style="left:125px;top:522px;width:958px;height:25px;background:#fff"></div>
<div class="a" style="left:125px;top:546px;width:958px;height:25px;background:#f8f8f8"></div>
<div class="a" style="left:125px;top:570px;width:958px;height:25px;background:#fff"></div>
<div class="a" style="left:125px;top:594px;width:958px;height:25px;background:#f8f8f8"></div>
<div class="a" style="left:125px;top:618px;width:958px;height:25px;background:#fff"></div>
<div class="a" style="left:125px;top:259px;width:1px;height:384px;background:#cfcfcf"></div>
<div class="a" style="left:152px;top:259px;width:1px;height:384px;background:#cfcfcf"></div>
<div class="a" style="left:224px;top:259px;width:1px;height:384px;background:#cfcfcf"></div>
<div class="a" style="left:320px;top:259px;width:1px;height:384px;background:#cfcfcf"></div>
<div class="a" style="left:400px;top:259px;width:1px;height:384px;background:#cfcfcf"></div>
<div class="a" style="left:448px;top:259px;width:1px;height:384px;background:#cfcfcf"></div>
<div class="a" style="left:522px;top:259px;width:1px;height:384px;background:#cfcfcf"></div>
<div class="a" style="left:602px;top:259px;width:1px;height:384px;background:#cfcfcf"></div>
<div class="a" style="left:682px;top:259px;width:1px;height:384px;background:#cfcfcf"></div>
<div class="a" style="left:754px;top:259px;width:1px;height:384px;background:#cfcfcf"></div>
<div class="a" style="left:834px;top:259px;width:1px;height:384px;background:#cfcfcf"></div>
<div class="a" style="left:890px;top:259px;width:1px;height:384px;background:#cfcfcf"></div>
<div class="a" style="left:970px;top:259px;width:1px;height:384px;background:#cfcfcf"></div>
<div class="a" style="left:1002px;top:259px;width:1px;height:384px;background:#cfcfcf"></div>
<div class="a" style="left:1082px;top:259px;width:1px;height:384px;background:#cfcfcf"></div>
<div class="a" style="left:125px;top:259px;width:958px;height:1px;background:#cfcfcf"></div>
<div class="a" style="left:125px;top:282px;width:958px;height:1px;background:#cfcfcf"></div>
<div class="a" style="left:125px;top:306px;width:958px;height:1px;background:#cfcfcf"></div>
<div class="a" style="left:125px;top:330px;width:958px;height:1px;background:#cfcfcf"></div>
<div class="a" style="left:125px;top:354px;width:958px;height:1px;background:#cfcfcf"></div>
<div class="a" style="left:125px;top:378px;width:958px;height:1px;background:#cfcfcf"></div>
<div class="a" style="left:125px;top:402px;width:958px;height:1px;background:#cfcfcf"></div>
<div class="a" style="left:125px;top:426px;width:958px;height:1px;background:#cfcfcf"></div>
<div class="a" style="left:125px;top:450px;width:958px;height:1px;background:#cfcfcf"></div>
<div class="a" style="left:125px;top:474px;width:958px;height:1px;background:#cfcfcf"></div>
<div class="a" style="left:125px;top:498px;width:958px;height:1px;background:#cfcfcf"></div>
<div class="a" style="left:125px;top:522px;width:958px;height:1px;background:#cfcfcf"></div>
<div class="a" style="left:125px;top:546px;width:958px;height:1px;background:#cfcfcf"></div>
<div class="a" style="left:125px;top:570px;width:958px;height:1px;background:#cfcfcf"></div>
<div class="a" style="left:125px;top:594px;width:958px;height:1px;background:#cfcfcf"></div>
<div class="a" style="left:125px;top:618px;width:958px;height:1px;background:#cfcfcf"></div>
<div class="a" style="left:125px;top:642px;width:958px;height:1px;background:#cfcfcf"></div>
<div class="a" style="left:125px;top:264px;width:27px;text-align:center;font-size:10px;letter-spacing:0.3px;font-weight:bold;color:#222">序号</div>
<div class="a" style="left:152px;top:264px;width:72px;text-align:center;font-size:10px;letter-spacing:0.3px;font-weight:bold;color:#222">仓库</div>
<div class="a" style="left:224px;top:264px;width:96px;text-align:center;font-size:10px;letter-spacing:0.3px;font-weight:bold;color:#222"><span style="color:#e5161c;font-weight:normal;font-size:10px;position:relative;top:1px;margin-right:1px">*</span>存货名称</div>
<div class="a" style="left:320px;top:264px;width:80px;text-align:center;font-size:10px;letter-spacing:0.3px;font-weight:bold;color:#222">规格型号</div>
<div class="a" style="left:400px;top:264px;width:48px;text-align:center;font-size:10px;letter-spacing:0.3px;font-weight:bold;color:#222"><span style="color:#e5161c;font-weight:normal;font-size:10px;position:relative;top:1px;margin-right:1px">*</span>数量</div>
<div class="a" style="left:448px;top:264px;width:74px;text-align:center;font-size:10px;letter-spacing:0.3px;font-weight:bold;color:#222"><span style="color:#e5161c;font-weight:normal;font-size:10px;position:relative;top:1px;margin-right:1px">*</span>采购单位</div>
<div class="a" style="left:522px;top:264px;width:80px;text-align:center;font-size:10px;letter-spacing:0.3px;font-weight:bold;color:#222">智能选单</div>
<div class="a" style="left:602px;top:264px;width:80px;text-align:center;font-size:10px;letter-spacing:0.3px;font-weight:bold;color:#222">计量单位组合</div>
<div class="a" style="left:682px;top:264px;width:72px;text-align:center;font-size:10px;letter-spacing:0.3px;font-weight:bold;color:#222">序列号</div>
<div class="a" style="left:754px;top:264px;width:80px;text-align:center;font-size:10px;letter-spacing:0.3px;font-weight:bold;color:#222"><span style="color:#e5161c;font-weight:normal;font-size:10px;position:relative;top:1px;margin-right:1px">*</span>税率%</div>
<div class="a" style="left:834px;top:264px;width:56px;text-align:center;font-size:10px;letter-spacing:0.3px;font-weight:bold;color:#222"><span style="color:#e5161c;font-weight:normal;font-size:10px;position:relative;top:1px;margin-right:1px">*</span>含税单价</div>
<div class="a" style="left:890px;top:264px;width:80px;text-align:center;font-size:10px;letter-spacing:0.3px;font-weight:bold;color:#222"><span style="color:#e5161c;font-weight:normal;font-size:10px;position:relative;top:1px;margin-right:1px">*</span>含税金额</div>
<div class="a" style="left:970px;top:264px;width:32px;text-align:center;font-size:10px;letter-spacing:0.3px;font-weight:bold;color:#222">赠品</div>
<div class="a" style="left:1002px;top:264px;width:80px;text-align:center;font-size:10px;letter-spacing:0.3px;font-weight:bold;color:#222">现存量说明</div>
<div class="a" style="left:125px;top:289px;width:28px;text-align:center;font-size:10px;color:#222">1</div>
<div class="a" style="left:125px;top:313px;width:28px;text-align:center;font-size:10px;color:#222">2</div>
<div class="a" style="left:125px;top:337px;width:28px;text-align:center;font-size:10px;color:#d2d2d2">3</div>
<div class="a" style="left:125px;top:361px;width:28px;text-align:center;font-size:10px;color:#d2d2d2">4</div>
<div class="a" style="left:125px;top:385px;width:28px;text-align:center;font-size:10px;color:#d2d2d2">5</div>
<div class="a" style="left:125px;top:409px;width:28px;text-align:center;font-size:10px;color:#d2d2d2">6</div>
<div class="a" style="left:125px;top:433px;width:28px;text-align:center;font-size:10px;color:#d2d2d2">7</div>
<div class="a" style="left:125px;top:457px;width:28px;text-align:center;font-size:10px;color:#d2d2d2">8</div>
<div class="a" style="left:125px;top:481px;width:28px;text-align:center;font-size:10px;color:#d2d2d2">9</div>
<div class="a" style="left:125px;top:505px;width:28px;text-align:center;font-size:10px;color:#d2d2d2">10</div>
<div class="a" style="left:125px;top:529px;width:28px;text-align:center;font-size:10px;color:#d2d2d2">11</div>
<div class="a" style="left:125px;top:553px;width:28px;text-align:center;font-size:10px;color:#d2d2d2">12</div>
<div class="a" style="left:125px;top:577px;width:28px;text-align:center;font-size:10px;color:#d2d2d2">13</div>
<div class="a" style="left:125px;top:601px;width:28px;text-align:center;font-size:10px;color:#d2d2d2">14</div>
<div class="a" style="left:125px;top:625px;width:28px;text-align:center;font-size:10px;color:#d2d2d2">15</div>
<div class="a" style="left:157px;top:288px;font-size:10px;color:#000">仓库1</div>
<div class="a" style="left:229px;top:288px;font-size:10px;color:#000">牛奶</div>
<div class="a" style="left:325px;top:288px;font-size:10px;color:#000">200ml\盒</div>
<div class="a" style="left:400px;top:288px;width:41px;text-align:right;font-size:10.5px;color:#000">33.00</div>
<div class="a" style="left:453px;top:288px;font-size:10px;color:#000">盒</div>
<div class="a" style="left:527px;top:288px;font-size:10px;color:#000"></div>
<div class="a" style="left:607px;top:288px;font-size:10px;color:#000">33盒</div>
<div class="a" style="left:687px;top:288px;font-size:10px;color:#000"></div>
<div class="a" style="left:754px;top:288px;width:73px;text-align:right;font-size:10.5px;color:#000">0.00%</div>
<div class="a" style="left:834px;top:288px;width:49px;text-align:right;font-size:10.5px;color:#000">2.00</div>
<div class="a" style="left:890px;top:288px;width:73px;text-align:right;font-size:10.5px;color:#000">66.00</div>
<div class="a" style="left:980.5px;top:289.5px;width:10px;height:10px;border:1px solid #808080;border-radius:2px;background:#fff"></div>
<div class="a" style="left:157px;top:312px;font-size:10px;color:#000">仓库1</div>
<div class="a" style="left:229px;top:312px;font-size:10px;color:#000">牛奶</div>
<div class="a" style="left:325px;top:312px;font-size:10px;color:#000">250ml\盒</div>
<div class="a" style="left:400px;top:312px;width:41px;text-align:right;font-size:10.5px;color:#000">44.00</div>
<div class="a" style="left:453px;top:312px;font-size:10px;color:#000">盒</div>
<div class="a" style="left:527px;top:312px;font-size:10px;color:#000"></div>
<div class="a" style="left:607px;top:312px;font-size:10px;color:#000">44盒</div>
<div class="a" style="left:687px;top:312px;font-size:10px;color:#000"></div>
<div class="a" style="left:754px;top:312px;width:73px;text-align:right;font-size:10.5px;color:#000">0.00%</div>
<div class="a" style="left:834px;top:312px;width:49px;text-align:right;font-size:10.5px;color:#000">2.50</div>
<div class="a" style="left:890px;top:312px;width:73px;text-align:right;font-size:10.5px;color:#000">110.00</div>
<div class="a" style="left:980.5px;top:313.5px;width:10px;height:10px;border:1px solid #808080;border-radius:2px;background:#fff"></div>
<div class="a" style="left:215px;top:275px;width:237px;height:58px;border:3.5px solid #f0525a;border-radius:3px"></div>
<div class="a" style="left:125px;top:648px;width:958px;height:24px;background:#f4f4f4;border:1px solid #cfcfcf"></div>
<div class="a" style="left:128px;top:652.5px;font-size:11px;font-weight:bold;color:#111">合计</div>
<div class="a" style="left:418px;top:653px;font-size:11px;font-weight:bold;color:#222">77.00</div>
<div class="a" style="left:934px;top:653px;font-size:11px;font-weight:bold;color:#222">176.00</div>
<div class="a" style="left:179px;top:681px;font-size:10px;color:#888">备注</div>
<div class="a" style="left:203px;top:695px;width:1074px;height:1px;background:#ddd"></div>
<div class="a" style="left:168px;top:703px;font-size:10px;color:#333">制单人</div>
<div class="a" style="left:204px;top:703.5px;font-size:10.3px;color:#000">mmm</div>
<div class="a" style="left:203px;top:717px;width:91px;height:1px;background:#ddd"></div>
<div class="a" style="left:344px;top:703px;font-size:10px;color:#333">审核人</div>
<div class="a" style="left:379px;top:703.5px;font-size:10.3px;color:#000">mmm</div>
<div class="a" style="left:378px;top:717px;width:91px;height:1px;background:#ddd"></div>
<div class="a" style="left:510px;top:703px;font-size:10px;color:#333">审核日期</div>
<div class="a" style="left:557px;top:703.5px;font-size:10.3px;color:#000">2026-01-23</div>
<div class="a" style="left:555px;top:717px;width:165px;height:1px;background:#ddd"></div>
<div class="a" style="left:686px;top:703px;font-size:10px;color:#333">审核时间</div>
<div class="a" style="left:733px;top:703.5px;font-size:10.3px;color:#000">2026-01-23 15:05:59</div>
<div class="a" style="left:731px;top:717px;width:123px;height:1px;background:#ddd"></div>
<div class="a" style="left:894px;top:703px;font-size:10px;color:#333">打印次数</div>
<div class="a" style="left:940px;top:703.5px;font-size:10.3px;color:#000">0</div>
<div class="a" style="left:939px;top:717px;width:90px;height:1px;background:#ddd"></div>
<div class="a" style="left:1070px;top:703px;font-size:10px;color:#333">创建时间</div>
<div class="a" style="left:1117px;top:703.5px;font-size:10.3px;color:#000">2026-01-23 15:05:38</div>
<div class="a" style="left:1115px;top:717px;width:123px;height:1px;background:#ddd"></div>
<div class="a" style="left:104px;top:721px;width:1260px;height:6px;background:#f3f3f3"></div>
</body></html>
